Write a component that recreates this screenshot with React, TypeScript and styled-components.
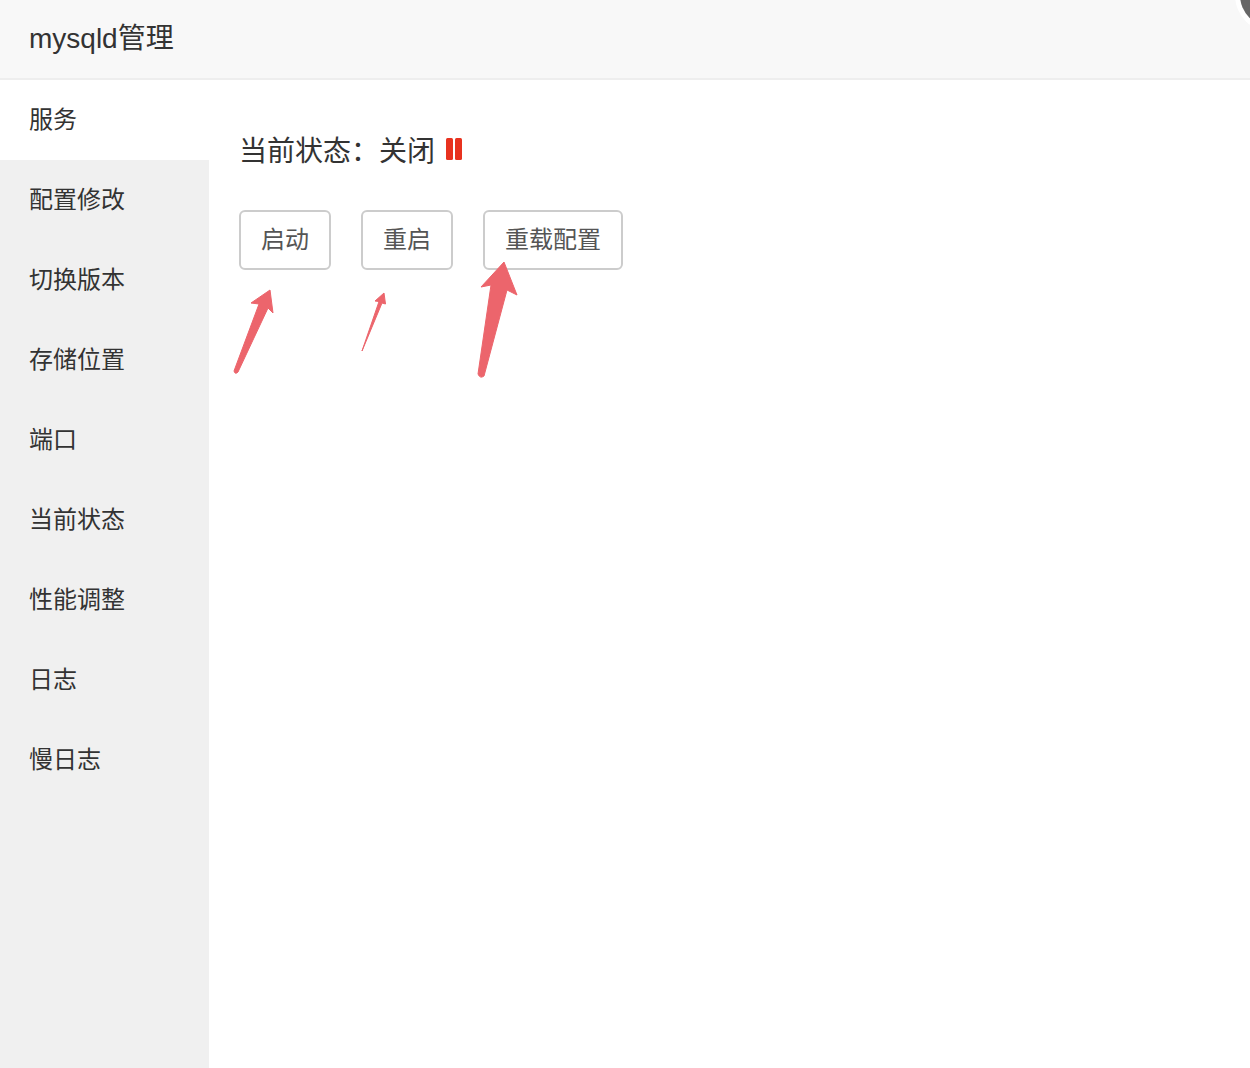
import React from 'react';
import styled, { createGlobalStyle } from 'styled-components';

const menuItems = ['服务', '配置修改', '切换版本', '存储位置', '端口', '当前状态', '性能调整', '日志', '慢日志'];
const actions = ['启动', '重启', '重载配置'];

const GlobalStyle = createGlobalStyle`
  html, body {
    margin: 0;
    padding: 0;
    background: #fff;
    overflow: hidden;
  }
  body {
    font-family: "Liberation Sans", "Noto Sans CJK SC", sans-serif;
  }
`;

const Page = styled.div`
  position: relative;
  width: 1250px;
  height: 1068px;
  display: flex;
  flex-direction: column;
  overflow: hidden;
`;

const Header = styled.header`
  flex: none;
  box-sizing: border-box;
  height: 80px;
  padding: 0 0 6px 29px;
  display: flex;
  align-items: center;
  background: #f8f8f8;
  border-bottom: 2px solid #eeeeee;
  color: #333;
  font-size: 28px;
`;

const Body = styled.div`
  flex: 1;
  display: flex;
`;

const Sidebar = styled.nav`
  flex: none;
  width: 209px;
  background: #f0f0f0;
`;

const MenuItem = styled.div<{ $active?: boolean }>`
  box-sizing: border-box;
  height: 80px;
  padding: 0 0 5px 29px;
  display: flex;
  align-items: center;
  background: ${props => (props.$active ? '#fff' : 'transparent')};
  color: #333;
  font-size: 24px;
`;

const Content = styled.main`
  flex: 1;
  padding: 50px 0 0 30px;
`;

const Status = styled.div`
  box-sizing: border-box;
  height: 40px;
  padding-bottom: 2px;
  display: flex;
  align-items: center;
  color: #333;
  font-size: 28px;
`;

const StatusValue = styled.span`
  margin-right: 11px;
`;

const Actions = styled.div`
  margin-top: 40px;
  display: flex;
  gap: 30px;
`;

const ActionButton = styled.button`
  height: 60px;
  padding: 0 20px 5px;
  background: #fff;
  border: 2px solid #cccccc;
  border-radius: 6px;
  color: #555;
  font-family: inherit;
  font-size: 24px;
`;

const Arrows = styled.svg`
  position: absolute;
  top: 0;
  left: 0;
  pointer-events: none;
`;

const CornerBadge = styled.div`
  position: absolute;
  top: -37px;
  right: -54px;
  width: 64px;
  height: 64px;
  border-radius: 50%;
  background: #666;
  box-shadow: 0 0 0 5px #fff;
`;

const PauseIcon = () => (
  <svg width="16" height="22" viewBox="0 0 16 22">
    <rect x="0" y="0" width="7" height="22" rx="1.5" fill="#e8321f" />
    <rect x="9" y="0" width="7" height="22" rx="1.5" fill="#e8321f" />
  </svg>
);

const App: React.FC = () => (
  <Page>
    <GlobalStyle />
    <Header>mysqld管理</Header>
    <Body>
      <Sidebar>
        {menuItems.map((item, i) => (
          <MenuItem key={item} $active={i === 0}>{item}</MenuItem>
        ))}
      </Sidebar>
      <Content>
        <Status>
          <StatusValue>当前状态：关闭</StatusValue>
          <PauseIcon />
        </Status>
        <Actions>
          {actions.map(label => (
            <ActionButton key={label}>{label}</ActionButton>
          ))}
        </Actions>
      </Content>
    </Body>
    <Arrows width="1250" height="1068" viewBox="0 0 1250 1068">
      <g fill="#ec656c" stroke="#ec656c" strokeLinejoin="round">
        <path strokeWidth="1" d="M270 290 L251 303 L259 304 L234 371 Q235 375 238 372 L268 308 L273 313 Z" />
        <path strokeWidth="1" d="M384 293 L375 301 L379 301.5 L362 351 L382 303 L385.5 304 Z" />
        <path strokeWidth="1" d="M504 262 L481 287 L491 285 L478 374 Q480 379 484 376 L507 290 L517 295 Z" />
      </g>
    </Arrows>
    <CornerBadge />
  </Page>
);

export default App;
